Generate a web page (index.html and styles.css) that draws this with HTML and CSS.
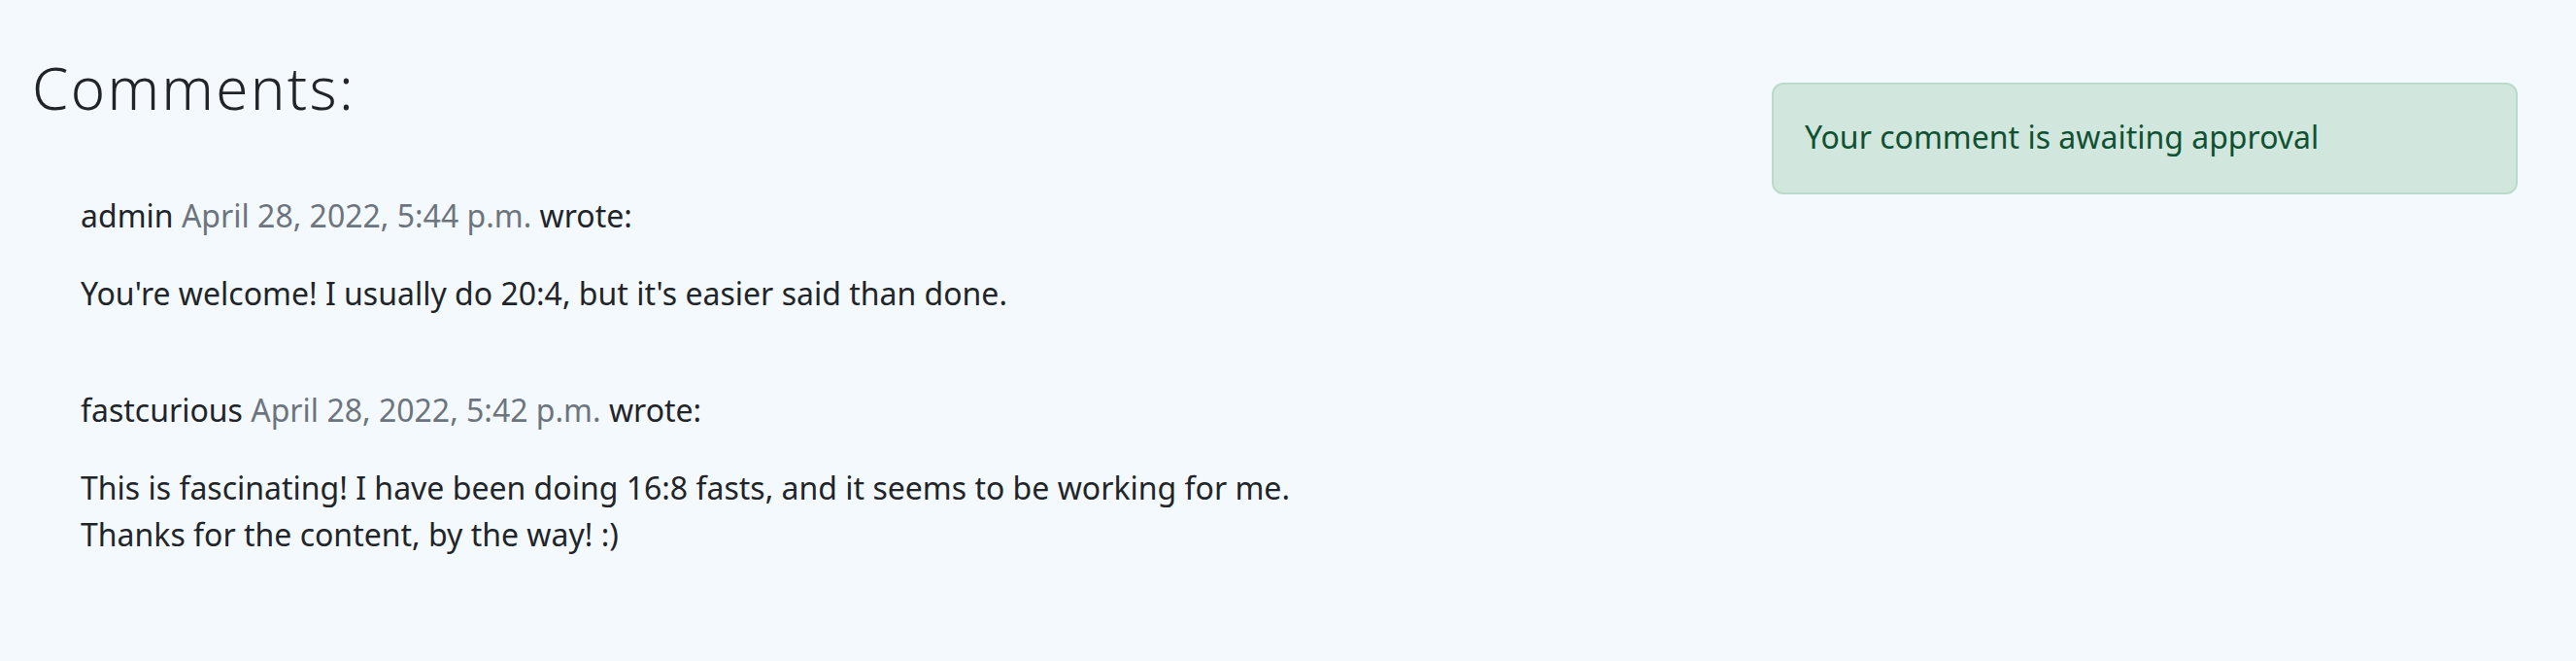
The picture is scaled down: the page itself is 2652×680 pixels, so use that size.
FILE: index.html
```html
<!DOCTYPE html>
<html lang="en">
<head>
<meta charset="utf-8">
<title>Comments</title>
<link rel="stylesheet" href="styles.css">
</head>
<body>
<main class="layout">
  <section class="comments-card">
    <h2 class="comments-title">Comments:</h2>
    <div class="card-body">
      <div class="comment">
        <p class="comment-meta">admin <span class="muted">April 28, 2022, 5:44 p.m.</span> wrote:</p>
        <p class="comment-body">You're welcome! I usually do 20:4, but it's easier said than done.</p>
      </div>
      <div class="comment">
        <p class="comment-meta">fastcurious <span class="muted">April 28, 2022, 5:42 p.m.</span> wrote:</p>
        <p class="comment-body">This is fascinating! I have been doing 16:8 fasts, and it seems to be working for me.<br>Thanks for the content, by the way! :)</p>
      </div>
    </div>
  </section>
  <aside class="side">
    <div class="alert-success">Your comment is awaiting approval</div>
  </aside>
</main>
</body>
</html>
```
FILE: styles.css
```css
* { box-sizing: border-box; }
html, body { margin: 0; padding: 0; }
body {
  background: #f4f9fe;
  color: #212529;
  font-family: "Noto Sans", "Open Sans", sans-serif;
  font-size: 32px;
  line-height: 48px;
  height: 680px;
  overflow: hidden;
}
.layout {
  display: grid;
  grid-template-columns: 1fr 768px;
  column-gap: 80px;
  padding: 0 60px 0 33px;
  align-items: start;
}
.comments-card { padding-top: 54px; }
.comments-title {
  margin: 0;
  font-size: 60px;
  line-height: 72px;
  font-weight: 300;
  letter-spacing: 2.3px;
  color: #212529;
}
.card-body { padding: 52px 0 0 30px; }
.comment { padding: 20px; }
.comment p { margin: 0 0 32px; }
.muted { color: #6c757d; }
.side { padding-top: 85px; }
.alert-success {
  background: #d1e7dd;
  border: 2px solid #badbcc;
  border-radius: 12px;
  color: #0f5132;
  padding: 30px 32px 33px;
}
```
